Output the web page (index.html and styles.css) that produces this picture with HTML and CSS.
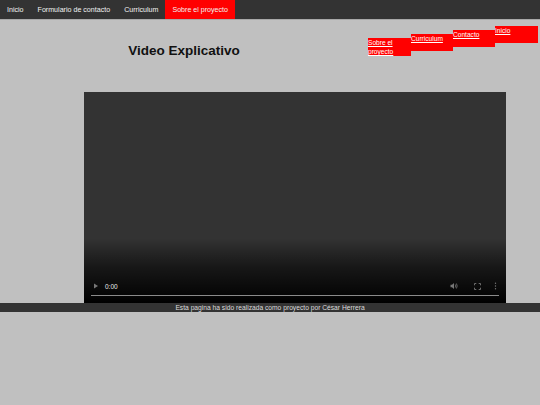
FILE: index.html
```html
<!DOCTYPE html>
<html lang="es">
<head>
<meta charset="utf-8">
<title>Sobre el proyecto</title>
<link rel="stylesheet" href="styles.css">
</head>
<body>
<nav class="topnav">
  <a href="#" class="nav-link">Inicio</a>
  <a href="#" class="nav-link">Formulario de contacto</a>
  <a href="#" class="nav-link">Curriculum</a>
  <a href="#" class="nav-link active">Sobre el proyecto</a>
</nav>
<header class="header">
  <div class="title-col">
    <h1 class="title">Video Explicativo</h1>
  </div>
  <div class="side-links">
    <a href="#" class="side-link step1">Inicio</a>
    <a href="#" class="side-link step2">Contacto</a>
    <a href="#" class="side-link step3">Curriculum</a>
    <a href="#" class="side-link step4">Sobre el proyecto</a>
  </div>
</header>
<div class="video">
  <div class="controls">
    <div class="control-row">
      <svg class="play" width="6" height="6" viewBox="0 0 6 6"><path d="M1 0.5 L5 3 L1 5.5 Z" fill="#777"/></svg>
      <span class="time">0:00</span>
      <span class="spacer"></span>
      <svg class="vol" width="9" height="8" viewBox="0 0 9 8"><path d="M0.5 2.7 H2 L4 1 V7 L2 5.3 H0.5 Z" fill="#777"/><path d="M5.3 2.5 Q6.3 4 5.3 5.5" stroke="#777" stroke-width="0.8" fill="none"/><path d="M6.4 1.5 Q8 4 6.4 6.5" stroke="#777" stroke-width="0.8" fill="none"/></svg>
      <svg class="fs" width="7" height="7" viewBox="0 0 7 7"><path d="M0.5 2.3 V0.5 H2.3 M4.7 0.5 H6.5 V2.3 M6.5 4.7 V6.5 H4.7 M2.3 6.5 H0.5 V4.7" stroke="#777" stroke-width="0.9" fill="none"/></svg>
      <svg class="menu" width="3" height="8" viewBox="0 0 3 8"><circle cx="1.5" cy="1.2" r="0.7" fill="#777"/><circle cx="1.5" cy="4" r="0.7" fill="#777"/><circle cx="1.5" cy="6.8" r="0.7" fill="#777"/></svg>
    </div>
    <div class="progress"></div>
  </div>
</div>
<footer class="footer">Esta pagina ha sido realizada como proyecto por César Herrera</footer>
</body>
</html>
```
FILE: styles.css
```css
html, body {
  margin: 0;
  padding: 0;
}
body {
  background: #c0c0c0;
  font-family: "Liberation Sans", Arial, sans-serif;
  min-height: 405px;
}
.topnav {
  display: flex;
  height: 20px;
  background: #333333;
  border-bottom: 1px solid #a8a8a8;
  box-sizing: border-box;
}
.nav-link {
  display: block;
  padding: 0 7px;
  line-height: 20px;
  font-size: 7.1px;
  color: #f2f2f2;
  text-decoration: none;
}
.nav-link.active {
  background: #ff0000;
}
.header {
  display: flex;
  height: 72px;
}
.title-col {
  flex: 1;
  text-align: center;
}
.title {
  margin: 23px 0 0;
  font-size: 13.5px;
  line-height: 16px;
  font-weight: bold;
  color: #111;
}
.side-links {
  display: flex;
  flex-direction: row-reverse;
  align-items: flex-start;
  padding-right: 2px;
}
.side-link {
  display: block;
  box-sizing: border-box;
  width: 42px;
  height: 17px;
  line-height: 9px;
  font-size: 6.6px;
  color: #fff;
  background: #ff0000;
  text-decoration: underline;
}
.step1 { margin-top: 6px; width: 43px; }
.step2 { margin-top: 10px; }
.step3 { margin-top: 14px; }
.step4 { margin-top: 18px; width: 43px; height: 18px; }
.video {
  margin-left: 84px;
  width: 422px;
  height: 211px;
  background: #333333;
  display: flex;
  flex-direction: column;
  justify-content: flex-end;
}
.controls {
  height: 58px;
  background: linear-gradient(to bottom, rgba(0,0,0,0) 0%, rgba(0,0,0,0.55) 45%, #000 100%);
  display: flex;
  flex-direction: column;
  justify-content: flex-end;
  padding: 0 7px 7px;
}
.control-row {
  display: flex;
  align-items: center;
  height: 10px;
  padding: 0 2px 0 2px;
  margin-bottom: 4px;
}
.play {
  margin-right: 6px;
}
.time {
  font-size: 6.5px;
  color: #e8e8e8;
}
.spacer {
  flex: 1;
}
.vol {
  margin-right: 15px;
}
.fs {
  margin-right: 13px;
}
.progress {
  height: 1px;
  background: #8a8a8a;
}
.footer {
  height: 9px;
  line-height: 9px;
  background: #333333;
  color: #dcdcdc;
  font-size: 6.7px;
  text-align: center;
}
```
